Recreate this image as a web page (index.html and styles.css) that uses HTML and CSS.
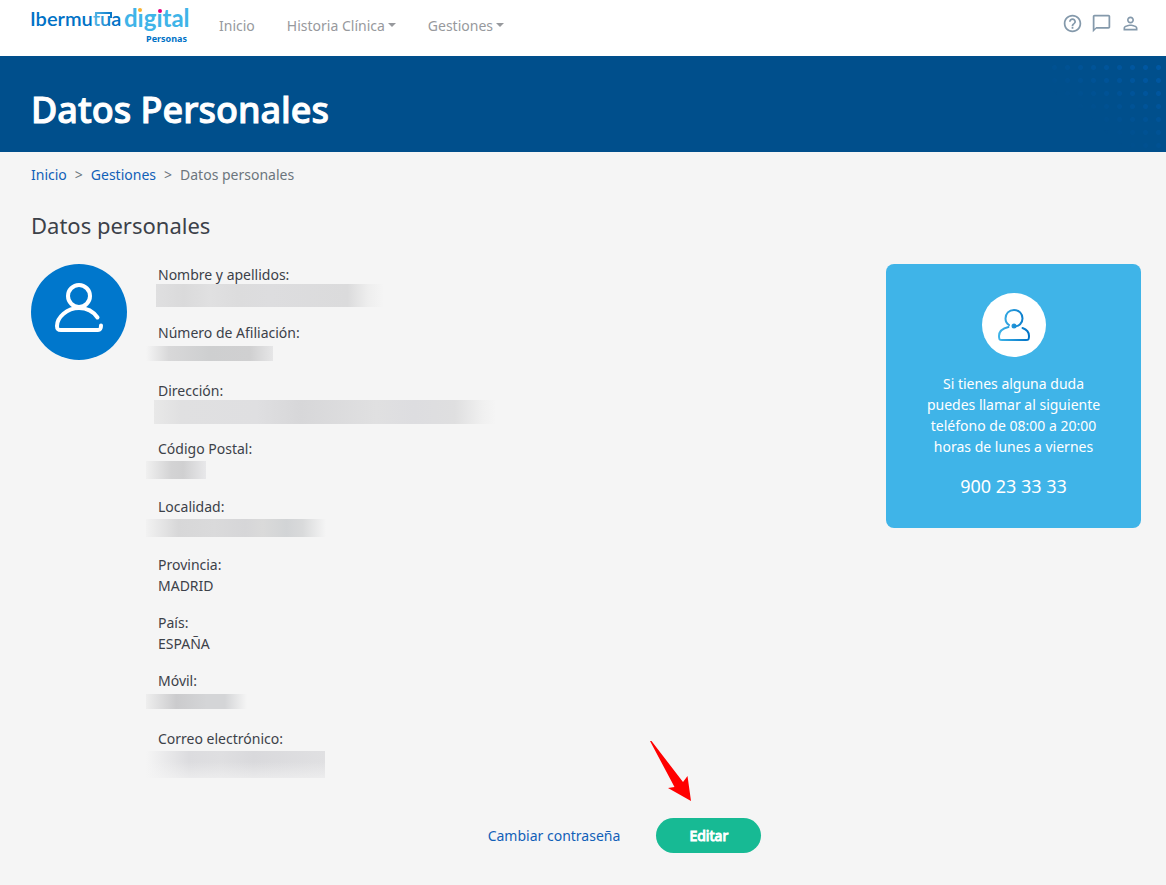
FILE: index.html
```html
<!DOCTYPE html>
<html lang="es">
<head>
    <meta charset="UTF-8">
    <meta name="viewport" content="width=device-width, initial-scale=1.0">
    <title>Datos Personales - Ibermutua digital</title>
    <link rel="stylesheet" href="styles.css">
</head>
<body>
    <header class="topbar">
        <a class="logo" href="#" aria-label="Ibermutua digital Personas">
            <svg width="160" height="40" viewBox="0 0 160 40">
                <defs>
                    <linearGradient id="tu" gradientUnits="userSpaceOnUse" x1="58" y1="0" x2="82" y2="0">
                        <stop offset="0" stop-color="#6cc9ee"/>
                        <stop offset="1" stop-color="#0072c6"/>
                    </linearGradient>
                </defs>
                <text class="logo-name" x="-1" y="18">Ibermu<tspan fill="url(#tu)">tu</tspan>a</text>
                <path d="M65 10V5H80V10" fill="none" stroke="url(#tu)" stroke-width="2"/>
                <text class="logo-digital" x="93" y="19">digital</text>
                <circle cx="109" cy="2" r="3" fill="#fff"/>
                <circle cx="129" cy="2" r="3" fill="#fff"/>
                <circle cx="109" cy="2" r="2" fill="#f9b233"/>
                <circle cx="129" cy="3" r="2" fill="#e6007e"/>
                <text class="logo-sub" x="156" y="34" text-anchor="end">Personas</text>
            </svg>
        </a>
        <nav class="menu">
            <a href="#">Inicio</a>
            <a class="dropdown" href="#">Historia Clínica</a>
            <a class="dropdown" href="#">Gestiones</a>
        </nav>
        <div class="tools">
            <button class="tool" aria-label="Ayuda">
                <svg viewBox="0 0 24 24"><path d="M11 18h2v-2h-2v2zm1-16C6.480 2 2 6.480 2 12s4.480 10 10 10 10-4.480 10-10S17.520 2 12 2zm0 18c-4.410 0-8-3.590-8-8s3.590-8 8-8 8 3.590 8 8-3.590 8-8 8zm0-14c-2.210 0-4 1.790-4 4h2c0-1.100.9-2 2-2s2 .9 2 2c0 2-3 1.750-3 5h2c0-2.250 3-2.500 3-5 0-2.210-1.790-4-4-4z"/></svg>
            </button>
            <button class="tool" aria-label="Mensajes">
                <svg viewBox="0 0 24 24"><path d="M20 2H4c-1.100 0-2 .9-2 2v18l4-4h14c1.100 0 2-.9 2-2V4c0-1.100-.9-2-2-2zm0 14H6l-2 2V4h16v12z"/></svg>
            </button>
            <button class="tool" aria-label="Perfil">
                <svg viewBox="0 0 24 24"><path d="M12 5.900c1.160 0 2.100.94 2.100 2.100s-.94 2.100-2.100 2.100S9.900 9.160 9.900 8s.94-2.100 2.100-2.100m0 9c2.970 0 6.100 1.460 6.100 2.100v1.100H5.900V17c0-.64 3.130-2.100 6.100-2.100M12 4C9.790 4 8 5.790 8 8s1.790 4 4 4 4-1.790 4-4-1.790-4-4-4zm0 9c-2.670 0-8 1.340-8 4v3h16v-3c0-2.660-5.330-4-8-4z"/></svg>
            </button>
        </div>
    </header>

    <div class="banner">
        <h1>Datos Personales</h1>
    </div>

    <main class="content">
        <nav class="breadcrumb" aria-label="Ruta">
            <a href="#">Inicio</a>
            <span>&gt;</span>
            <a href="#">Gestiones</a>
            <span>&gt;</span>
            <span>Datos personales</span>
        </nav>

        <h2>Datos personales</h2>

        <div class="profile">
            <div class="avatar">
                <svg width="52" height="52" viewBox="0 0 52 52" fill="none" stroke="#fff" stroke-width="4" stroke-linecap="round" stroke-linejoin="round">
                    <circle cx="26" cy="13" r="11"/>
                    <path d="M44.500 34.500C40 28 33 25 26 25C14 25 4 34.500 4 43C4 46 5 47 8 47H45C47 47 48 46 48 42.500"/>
                </svg>
            </div>

            <dl class="fields">
                <div class="field">
                    <dt>Nombre y apellidos:</dt>
                    <dd><span class="hidden-value name"></span></dd>
                </div>
                <div class="field">
                    <dt>Número de Afiliación:</dt>
                    <dd><span class="hidden-value affiliation"></span></dd>
                </div>
                <div class="field">
                    <dt>Dirección:</dt>
                    <dd><span class="hidden-value address"></span></dd>
                </div>
                <div class="field">
                    <dt>Código Postal:</dt>
                    <dd><span class="hidden-value postal"></span></dd>
                </div>
                <div class="field">
                    <dt>Localidad:</dt>
                    <dd><span class="hidden-value city"></span></dd>
                </div>
                <div class="field">
                    <dt>Provincia:</dt>
                    <dd>MADRID</dd>
                </div>
                <div class="field">
                    <dt>País:</dt>
                    <dd>ESPAÑA</dd>
                </div>
                <div class="field">
                    <dt>Móvil:</dt>
                    <dd><span class="hidden-value phone"></span></dd>
                </div>
                <div class="field">
                    <dt>Correo electrónico:</dt>
                    <dd class="top"><span class="hidden-value email"></span></dd>
                </div>
            </dl>

            <aside class="help-card">
                <div class="help-icon">
                    <svg width="34" height="34" viewBox="0 0 34 34" fill="none" stroke="url(#agent)" stroke-width="2" stroke-linecap="round">
                        <defs>
                            <linearGradient id="agent" gradientUnits="userSpaceOnUse" x1="2" y1="20" x2="32" y2="20">
                                <stop offset="0" stop-color="#3fb4e8"/>
                                <stop offset="1" stop-color="#0072c6"/>
                            </linearGradient>
                        </defs>
                        <path d="M12 17C9.500 15.500 8.500 13 8.500 10.500C8.500 5.500 12 2 17 2S25.500 5.500 25.500 10.500C25.500 15 22 18.500 17 18.500"/>
                        <circle cx="17" cy="18" r="1.500" fill="#0f7fcd"/>
                        <path d="M11.500 19C5 20.500 2 23 2 28C2 31.500 2.500 32 5 32H29C31.500 32 32 31.500 32 28C32 24 30 21.500 25.500 20"/>
                    </svg>
                </div>
                <p>Si tienes alguna duda puedes llamar al siguiente teléfono de 08:00 a 20:00 horas de lunes a viernes</p>
                <a class="help-phone" href="tel:900233333">900 23 33 33</a>
            </aside>
        </div>

        <div class="actions">
            <a href="#">Cambiar contraseña</a>
            <div class="edit">
                <svg class="arrow" width="42" height="60" viewBox="0 0 42 60"><path d="M0 0L1.500 0L33 41L37.500 35L41 60L18 47L24.500 46Z" fill="#f00"/></svg>
                <button class="edit-button">Editar</button>
            </div>
        </div>
    </main>
</body>
</html>
```

FILE: styles.css
```css
* {
    box-sizing: border-box;
}

body {
    margin: 0;
    min-height: 100vh;
    background: #f5f5f5;
    color: #3c4149;
    font-family: "Noto Sans", sans-serif;
    font-size: 14px;
    line-height: 21px;
}

a {
    color: #1160b8;
    text-decoration: none;
}

/* Header */
.topbar {
    display: flex;
    align-items: center;
    height: 56px;
    padding: 0 25px 0 31px;
    background: #fff;
}

.logo {
    display: block;
    height: 40px;
}

.logo svg {
    display: block;
    overflow: visible;
}

.logo-name {
    font-family: Lato, sans-serif;
    font-size: 20px;
    font-weight: 600;
    fill: #0072c6;
}

.logo-digital {
    font-family: Lato, sans-serif;
    font-size: 24px;
    font-weight: 700;
    fill: #3fb4e8;
}

.logo-sub {
    font-size: 9px;
    font-weight: 700;
    fill: #0072c6;
}

.menu {
    display: flex;
    gap: 32px;
    margin-left: 28px;
    padding-bottom: 5px;
}

.menu a {
    color: #97999d;
}

.dropdown::after {
    content: "";
    display: inline-block;
    margin-left: 3px;
    vertical-align: 4px;
    border: 4px solid transparent;
    border-top-color: #97999d;
    border-bottom: 0;
}

.tools {
    display: flex;
    gap: 8px;
    margin-left: auto;
    padding-bottom: 9px;
}

.tool {
    width: 21px;
    height: 21px;
    padding: 0;
    border: 0;
    background: none;
    cursor: pointer;
}

.tool svg {
    display: block;
    fill: #8499ab;
}

/* Title banner */
.banner {
    position: relative;
    display: flex;
    align-items: center;
    height: 96px;
    padding: 12px 31px 0;
    background: #004f8c;
}

.banner::after {
    content: "";
    position: absolute;
    top: 5px;
    right: 1px;
    width: 117px;
    height: 91px;
    background: radial-gradient(circle, #0059a6 2px, transparent 3px) 0 0 / 13px 13px;
    -webkit-mask-image: linear-gradient(to top right, transparent 35%, #000);
    mask-image: linear-gradient(to top right, transparent 35%, #000);
}

h1 {
    margin: 0;
    color: #fff;
    font-size: 36px;
    font-weight: 500;
    line-height: 48px;
    -webkit-text-stroke: 1px #fff;
}

/* Content */
.content {
    padding: 12px 25px 32px 31px;
}

.breadcrumb {
    display: flex;
    gap: 8px;
    color: #6c757d;
}

h2 {
    margin: 24px 0 22px;
    font-size: 22px;
    font-weight: 400;
    line-height: 33px;
}

.profile {
    display: flex;
    align-items: flex-start;
}

.avatar {
    display: flex;
    justify-content: center;
    flex: none;
    width: 96px;
    height: 96px;
    padding-top: 19px;
    border-radius: 50%;
    background: #0077cc;
}

.fields {
    flex: 1;
    margin: 0 0 0 31px;
}

.field {
    margin-bottom: 16px;
}

.field dd {
    display: flex;
    align-items: center;
    height: 21px;
    margin: 0;
}

.field dd.top {
    align-items: flex-start;
    padding-top: 2px;
}

/* Masked personal data */
.hidden-value {
    flex: none;
    height: 18px;
    margin-left: -12px;
}

.name {
    width: 228px;
    height: 23px;
    margin-left: -2px;
    background: linear-gradient(to right, #dfdfe0, #dadadb 12%, #e0e0e1 24%, #dcdcdd 36%, #dddddf 50%, #dbdbdc 84%, #eee 93%, #f5f5f5);
}

.affiliation {
    width: 127px;
    height: 15px;
    background: linear-gradient(to right, #f5f5f5, #d8d8d9 18%, #cecfd0 50%, #d0d0d1 82%, #e6e6e7);
}

.address {
    width: 342px;
    height: 24px;
    margin-left: -4px;
    background: linear-gradient(to right, #e8e8e8, #e0e0e1 8%, #dfdfe1 30%, #d7d7d9 43%, #e0e0e1 65%, #dddde0 76%, #dfdfe0 88%, #f0f0f0 96%, #f5f5f5);
}

.postal {
    width: 60px;
    background: linear-gradient(to right, #f0f0f0, #d3d3d4 42%, #d0d0d1 62%, #e8e8ea);
}

.city {
    width: 180px;
    background: linear-gradient(to right, #f2f2f2, #d7d7d8 18%, #dadadb 38%, #d6d6d8 55%, #dadada 65%, #d2d4d6 78%, #d9dadb 87%, #f5f5f5);
}

.phone {
    width: 101px;
    height: 15px;
    background: linear-gradient(to right, #eee, #cbcbcd 30%, #d4d5d7 60%, #d4d5d7 78%, #f5f5f5);
}

.email {
    width: 179px;
    height: 27px;
    background: linear-gradient(to bottom, transparent 40%, rgba(245, 245, 245, 0.6)), linear-gradient(to right, #f5f5f5, #dcdcdf 24%, #dfdfe1 42%, #d9d9dc 60%, #e0e0e2);
}

.help-card {
    display: flex;
    flex-direction: column;
    align-items: center;
    flex: none;
    width: 255px;
    min-height: 264px;
    padding: 29px 32px 24px;
    border-radius: 8px;
    background: #3fb4e8;
    color: #fff;
    text-align: center;
}

.help-icon {
    display: flex;
    align-items: center;
    justify-content: center;
    flex: none;
    width: 64px;
    height: 64px;
    border-radius: 50%;
    background: #fff;
}

.help-card p {
    margin: 16px 0;
}

.help-phone {
    color: #fff;
    font-size: 18px;
    line-height: 27px;
}

.actions {
    display: flex;
    align-items: center;
    justify-content: center;
    gap: 36px;
    margin-top: 32px;
    padding-left: 77px;
}

.edit {
    position: relative;
}

.edit-button {
    display: block;
    width: 105px;
    height: 35px;
    padding: 0;
    border: 0;
    border-radius: 18px;
    background: #17ba94;
    color: #fff;
    font: 400 14px "Noto Sans", sans-serif;
    -webkit-text-stroke: 1px #fff;
    cursor: pointer;
}

.arrow {
    position: absolute;
    left: -6px;
    bottom: 52px;
}
```
